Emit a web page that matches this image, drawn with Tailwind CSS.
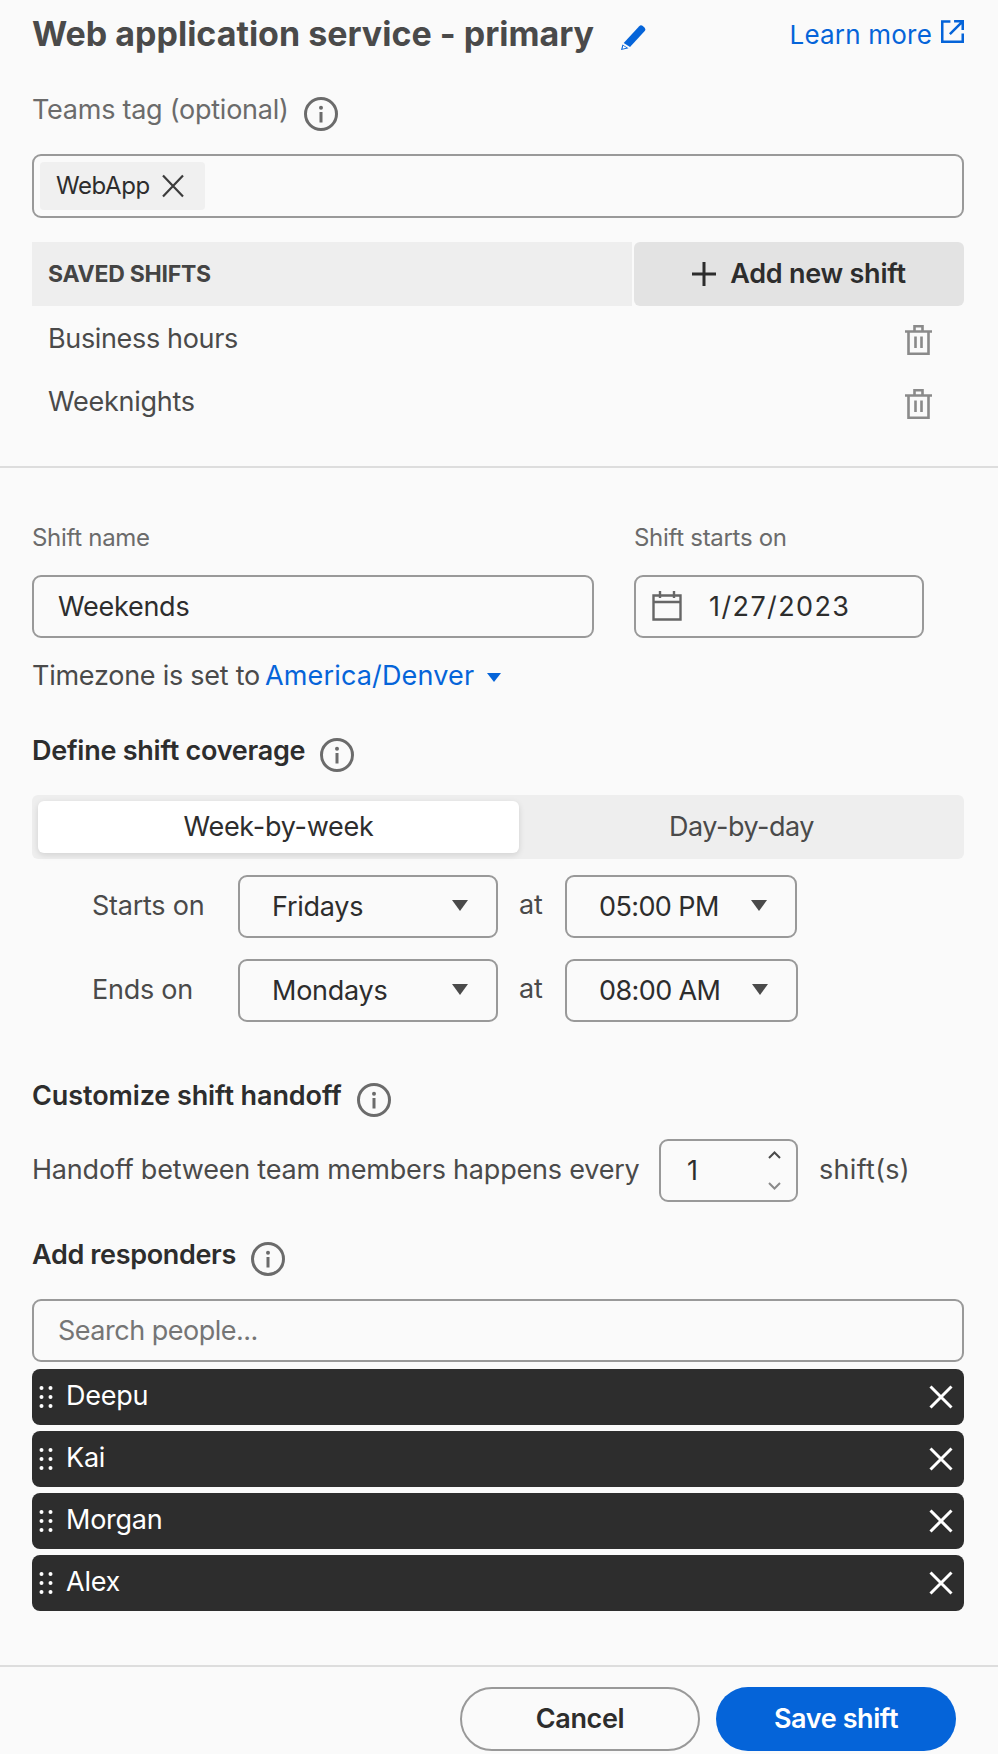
<!doctype html>
<html>
<head>
<meta charset="utf-8">
<script src="https://cdn.jsdelivr.net/npm/@tailwindcss/browser@4"></script>
</head>
<body class="bg-[#fafafa] font-[Inter,sans-serif] text-[#3c3c3c] text-[27px] tracking-[-0.25px]">
<div class="w-[998px] h-[1754px] overflow-hidden">
  <div class="pl-8 pr-[34px] pt-[10px]">
    <div class="flex items-center h-12">
      <h1 class="text-[34px] font-bold text-[#4a4a4a] leading-none tracking-[0px]">Web application service - primary</h1>
      <svg class="ml-[26px] mt-[8px] w-[26px] h-[26px]" viewBox="0 0 26 26"><path fill="#0564d9" d="M19.2 1.2a2.6 2.6 0 0 1 3.6-.1l1.6 1.5a2.6 2.6 0 0 1 .1 3.6L10 22 3.700 18z"/><path fill="#0564d9" d="M2.500 19.500 8.500 23.300 1 25z"/><path fill="#fff" d="M3.200 20.700 6.400 22.800 2.500 23.700z"/></svg>
      <a class="ml-auto flex items-center text-[#0564d9] text-[26px] tracking-[0.2px]">Learn more<svg class="ml-[9px] mb-[5px] w-[23px] h-[23px]" viewBox="0 0 22 22" fill="none" stroke="#0564d9" stroke-width="2.400"><path d="M9 1.500H1.200V20.800H20.800V13M8.500 13.500 20 2M12.500 1.200H20.800V9.500"/></svg></a>
    </div>
    <div class="flex items-center h-[34px] mt-[39px] text-[#6b6b6b]">
      <span class="-mt-[7px]">Teams tag (optional)</span>
      <svg class="ml-[15px] w-[34px] h-[34px]" viewBox="0 0 34 34" fill="none"><circle cx="17" cy="17" r="15.500" stroke="#6b6b6b" stroke-width="3"/><circle cx="17" cy="10.700" r="2" fill="#6b6b6b"/><rect x="15.500" y="15" width="3" height="10.500" fill="#6b6b6b"/></svg>
    </div>
    <div class="mt-[23px] h-16 border-2 border-[#999] rounded-[9px] flex items-center px-[6px]">
      <div class="h-12 w-[165px] bg-[#f0f0f0] rounded-[4px] flex items-center pl-4 text-[24px] tracking-[-0.4px] text-[#2d2d2d]">WebApp<svg class="ml-[11px] w-6 h-6" viewBox="0 0 24 24" stroke="#3c3c3c" stroke-width="2.200"><path d="M2 1.500 22 22.500M22 1.500 2 22.500"/></svg></div>
    </div>
    <div class="mt-6 h-16 flex">
      <div class="flex-1 bg-[#eeeeee] flex items-center pl-4 text-[23px] font-bold text-[#444] tracking-[-0.25px]"><span class="mt-[1px]">SAVED SHIFTS</span></div>
      <div class="ml-[2px] w-[330px] bg-[#e3e3e3] rounded-[6px] flex items-center justify-center text-[#2d2d2d] font-semibold">
        <svg class="mr-[14px] w-6 h-6" viewBox="0 0 24 24" stroke="#2d2d2d" stroke-width="3"><path d="M12 0V24M0 12H24"/></svg><span class="mt-[1px]">Add new shift</span>
      </div>
    </div>
    <div class="h-16 flex items-center justify-between pl-4 pr-8 text-[#4a4a4a]"><span class="mt-[2px] tracking-[-0.35px]">Business hours</span>
      <svg class="w-[27px] h-[30px] mt-[4px]" viewBox="0 0 27 30" fill="none" stroke="#8a8a8a" stroke-width="2.600"><path d="M0 6.500H27M9.500 6V1.300H17.500V6M3.500 7V28.700H23.500V7M10.500 11.500V23M16.500 11.500V23"/></svg></div>
    <div class="h-16 flex items-center justify-between pl-4 pr-8 text-[#4a4a4a]"><span class="mt-[1px]">Weeknights</span>
      <svg class="w-[27px] h-[30px] mt-[4px]" viewBox="0 0 27 30" fill="none" stroke="#8a8a8a" stroke-width="2.600"><path d="M0 6.500H27M9.500 6V1.300H17.500V6M3.500 7V28.700H23.500V7M10.500 11.500V23M16.500 11.500V23"/></svg></div>
  </div>
  <div class="mt-8 h-[2px] bg-[#dddddd]"></div>
  <div class="pl-8 pr-[34px]">
    <div class="mt-[54px] h-8 flex text-[24px] tracking-[-0.3px] text-[#6b6b6b] items-center">
      <span class="w-[602px]">Shift name</span><span>Shift starts on</span>
    </div>
    <div class="mt-[21px] flex gap-[40px]">
      <div class="w-[562px] h-[63px] border-2 border-[#999] rounded-[9px] flex items-center pl-6 text-[#2d2d2d]"><span class="mt-[2px]">Weekends</span></div>
      <div class="w-[290px] h-[63px] border-2 border-[#999] rounded-[9px] flex items-center pl-[16px] text-[#2d2d2d]">
        <svg class="w-[30px] h-[30px] mr-[27px] mt-[-2px]" viewBox="0 0 30 30" fill="none" stroke="#666" stroke-width="2.400"><path d="M1.500 4.500H28.500V28.500H1.500ZM1.500 11H28.500M8 0V7M22 0V7"/></svg><span class="mt-[2px] tracking-[1.4px]">1/27/2023</span>
      </div>
    </div>
    <div class="mt-[22px] h-8 flex items-center text-[#4a4a4a]">Timezone is set to<span class="ml-[5px] text-[#0564d9] tracking-[0.15px]">America/Denver</span>
      <svg class="ml-[13px] mt-[3px] w-[14px] h-[9px]" viewBox="0 0 14 9"><path fill="#0564d9" d="M0 0H14L7 9Z"/></svg></div>
    <div class="mt-[46px] h-[34px] flex items-center font-semibold text-[#2d2d2d]">
      <span class="-mt-[7px]">Define shift coverage</span>
      <svg class="ml-[15px] w-[34px] h-[34px]" viewBox="0 0 34 34" fill="none"><circle cx="17" cy="17" r="15.500" stroke="#6b6b6b" stroke-width="3"/><circle cx="17" cy="10.700" r="2" fill="#6b6b6b"/><rect x="15.500" y="15" width="3" height="10.500" fill="#6b6b6b"/></svg>
    </div>
    <div class="mt-[23px] h-16 bg-[#eeeeee] rounded-[6px] flex items-center pl-[6px]">
      <div class="w-[481px] h-[52px] bg-white rounded-[6px] shadow-[0_2px_6px_rgba(0,0,0,0.12)] flex items-center justify-center text-[#2d2d2d]"><span class="mt-[1px]">Week-by-week</span></div>
      <div class="flex-1 flex items-center justify-center text-[#4a4a4a]"><span class="mt-[1px] tracking-[-0.5px]">Day-by-day</span></div>
    </div>
    <div class="mt-4 h-[63px] flex items-center">
      <span class="w-[146px] ml-[60px] text-[#4a4a4a] -mt-[1px]">Starts on</span>
      <div class="w-[260px] h-[63px] border-2 border-[#999] rounded-[9px] flex items-center justify-between pl-[32px] pr-[28px] text-[#2d2d2d]"><span class="mt-[2px]">Fridays</span><svg class="w-4 h-[11px] -mt-[2px]" viewBox="0 0 16 11"><path fill="#4a4a4a" d="M0 0H16L8 11Z"/></svg></div>
      <span class="w-[67px] pl-[21px] text-[#4a4a4a] -mt-[2px]">at</span>
      <div class="w-[232px] h-[63px] border-2 border-[#999] rounded-[9px] flex items-center justify-between pl-[32px] pr-[28px] text-[#2d2d2d]"><span class="mt-[2px] tracking-[-0.6px]">05:00 PM</span><svg class="w-4 h-[11px] -mt-[2px]" viewBox="0 0 16 11"><path fill="#4a4a4a" d="M0 0H16L8 11Z"/></svg></div>
    </div>
    <div class="mt-[21px] h-[63px] flex items-center">
      <span class="w-[146px] ml-[60px] text-[#4a4a4a] -mt-[1px]">Ends on</span>
      <div class="w-[260px] h-[63px] border-2 border-[#999] rounded-[9px] flex items-center justify-between pl-[32px] pr-[28px] text-[#2d2d2d]"><span class="mt-[2px]">Mondays</span><svg class="w-4 h-[11px] -mt-[2px]" viewBox="0 0 16 11"><path fill="#4a4a4a" d="M0 0H16L8 11Z"/></svg></div>
      <span class="w-[67px] pl-[21px] text-[#4a4a4a] -mt-[2px]">at</span>
      <div class="w-[233px] h-[63px] border-2 border-[#999] rounded-[9px] flex items-center justify-between pl-[32px] pr-[28px] text-[#2d2d2d]"><span class="mt-[2px] tracking-[-0.6px]">08:00 AM</span><svg class="w-4 h-[11px] -mt-[2px]" viewBox="0 0 16 11"><path fill="#4a4a4a" d="M0 0H16L8 11Z"/></svg></div>
    </div>
    <div class="mt-[61px] h-[34px] flex items-center font-semibold text-[#2d2d2d]">
      <span class="-mt-[7px] tracking-[-0.1px]">Customize shift handoff</span>
      <svg class="ml-[15px] w-[34px] h-[34px]" viewBox="0 0 34 34" fill="none"><circle cx="17" cy="17" r="15.500" stroke="#6b6b6b" stroke-width="3"/><circle cx="17" cy="10.700" r="2" fill="#6b6b6b"/><rect x="15.500" y="15" width="3" height="10.500" fill="#6b6b6b"/></svg>
    </div>
    <div class="mt-[22px] h-[63px] flex items-center text-[#4a4a4a]">
      <span class="w-[627px] tracking-[-0.2px]">Handoff between team members happens every</span>
      <div class="w-[139px] h-[63px] border-2 border-[#999] rounded-[9px] flex items-center justify-between pl-[26px] pr-[15px] text-[#2d2d2d]">
        <span class="mt-[1px]">1</span>
        <svg class="w-[13px] h-[39px]" viewBox="0 0 13 39" fill="none" stroke-width="2"><path stroke="#4a4a4a" d="M1 7 6.500 1.500 12 7"/><path stroke="#8a8a8a" d="M1 32 6.500 37.500 12 32"/></svg>
      </div>
      <span class="ml-[21px] tracking-[0.3px]">shift(s)</span>
    </div>
    <div class="mt-10 h-[34px] flex items-center font-semibold text-[#2d2d2d]">
      <span class="-mt-[7px] tracking-[-0.35px]">Add responders</span>
      <svg class="ml-[15px] w-[34px] h-[34px]" viewBox="0 0 34 34" fill="none"><circle cx="17" cy="17" r="15.500" stroke="#6b6b6b" stroke-width="3"/><circle cx="17" cy="10.700" r="2" fill="#6b6b6b"/><rect x="15.500" y="15" width="3" height="10.500" fill="#6b6b6b"/></svg>
    </div>
    <div class="mt-[23px] h-[63px] border-2 border-[#999] rounded-[9px] flex items-center pl-6 text-[#757575] tracking-[-0.5px]"><span class="mt-[2px]">Search people...</span></div>
    <div class="mt-[7px] flex flex-col gap-[6px]">
      <div class="h-14 bg-[#2d2d2d] rounded-[8px] flex items-center justify-between pl-[7px] pr-[11px] text-white">
        <span class="flex items-center"><svg class="w-[14px] h-[24px] mr-[13px]" viewBox="0 0 14 24" fill="#fff"><circle cx="2.500" cy="3" r="2"/><circle cx="11.500" cy="3" r="2"/><circle cx="2.500" cy="12" r="2"/><circle cx="11.500" cy="12" r="2"/><circle cx="2.500" cy="21" r="2"/><circle cx="11.500" cy="21" r="2"/></svg><span class="-mt-[2px]">Deepu</span></span>
        <svg class="w-6 h-6" viewBox="0 0 24 24" stroke="#fff" stroke-width="3"><path d="M1.500 1.500 22.500 22.500M22.500 1.500 1.500 22.500"/></svg>
      </div>
      <div class="h-14 bg-[#2d2d2d] rounded-[8px] flex items-center justify-between pl-[7px] pr-[11px] text-white">
        <span class="flex items-center"><svg class="w-[14px] h-[24px] mr-[13px]" viewBox="0 0 14 24" fill="#fff"><circle cx="2.500" cy="3" r="2"/><circle cx="11.500" cy="3" r="2"/><circle cx="2.500" cy="12" r="2"/><circle cx="11.500" cy="12" r="2"/><circle cx="2.500" cy="21" r="2"/><circle cx="11.500" cy="21" r="2"/></svg><span class="-mt-[2px]">Kai</span></span>
        <svg class="w-6 h-6" viewBox="0 0 24 24" stroke="#fff" stroke-width="3"><path d="M1.500 1.500 22.500 22.500M22.500 1.500 1.500 22.500"/></svg>
      </div>
      <div class="h-14 bg-[#2d2d2d] rounded-[8px] flex items-center justify-between pl-[7px] pr-[11px] text-white">
        <span class="flex items-center"><svg class="w-[14px] h-[24px] mr-[13px]" viewBox="0 0 14 24" fill="#fff"><circle cx="2.500" cy="3" r="2"/><circle cx="11.500" cy="3" r="2"/><circle cx="2.500" cy="12" r="2"/><circle cx="11.500" cy="12" r="2"/><circle cx="2.500" cy="21" r="2"/><circle cx="11.500" cy="21" r="2"/></svg><span class="-mt-[2px]">Morgan</span></span>
        <svg class="w-6 h-6" viewBox="0 0 24 24" stroke="#fff" stroke-width="3"><path d="M1.500 1.500 22.500 22.500M22.500 1.500 1.500 22.500"/></svg>
      </div>
      <div class="h-14 bg-[#2d2d2d] rounded-[8px] flex items-center justify-between pl-[7px] pr-[11px] text-white">
        <span class="flex items-center"><svg class="w-[14px] h-[24px] mr-[13px]" viewBox="0 0 14 24" fill="#fff"><circle cx="2.500" cy="3" r="2"/><circle cx="11.500" cy="3" r="2"/><circle cx="2.500" cy="12" r="2"/><circle cx="11.500" cy="12" r="2"/><circle cx="2.500" cy="21" r="2"/><circle cx="11.500" cy="21" r="2"/></svg><span class="-mt-[2px]">Alex</span></span>
        <svg class="w-6 h-6" viewBox="0 0 24 24" stroke="#fff" stroke-width="3"><path d="M1.500 1.500 22.500 22.500M22.500 1.500 1.500 22.500"/></svg>
      </div>
    </div>
  </div>
  <div class="mt-[54px] h-[2px] bg-[#dddddd]"></div>
  <div class="mt-5 flex justify-end gap-4 pr-[42px]">
    <button class="w-[240px] h-16 rounded-full border-2 border-[#999] font-semibold text-[#2d2d2d] tracking-[-0.4px]">Cancel</button>
    <button class="w-[240px] h-16 rounded-full bg-[#0564d9] font-semibold text-white tracking-[-0.4px]">Save shift</button>
  </div>
</div>
</body>
</html>
